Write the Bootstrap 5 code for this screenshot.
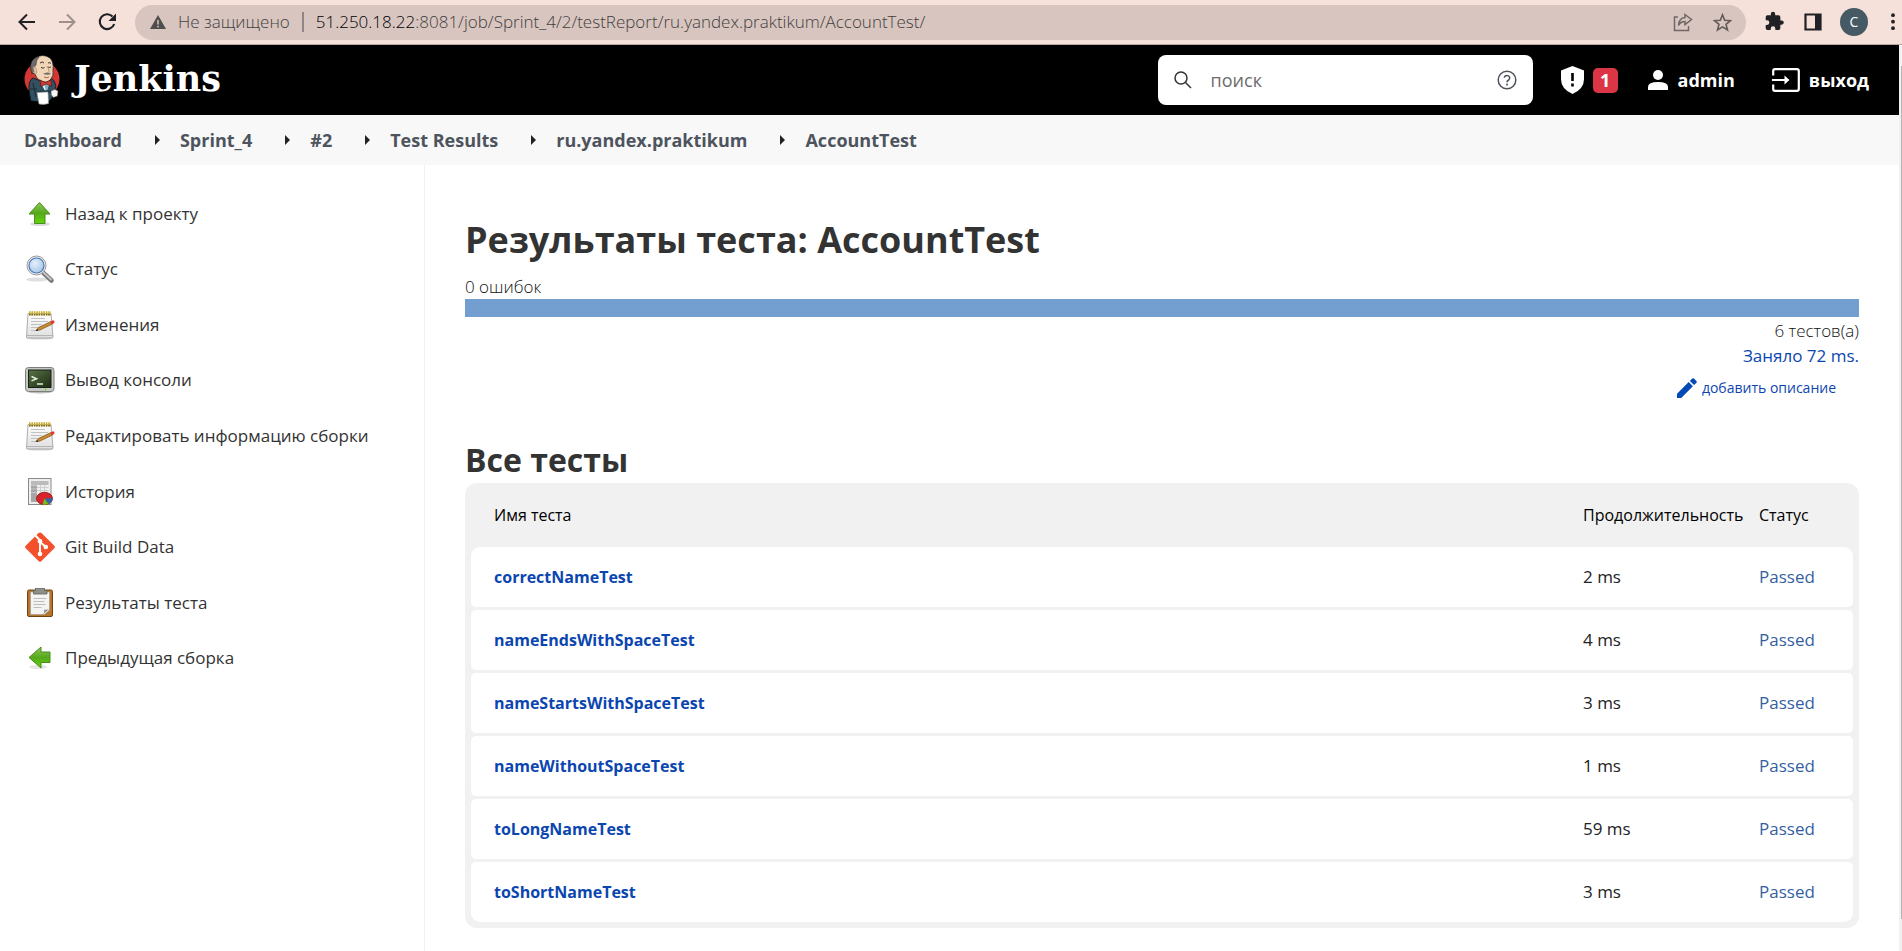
<!DOCTYPE html>
<html lang="ru">
<head>
<meta charset="utf-8">
<meta name="viewport" content="width=device-width, initial-scale=1">
<title>AccountTest [Jenkins]</title>
<link href="https://cdn.jsdelivr.net/npm/bootstrap@5.3.0/dist/css/bootstrap.min.css" rel="stylesheet">
<style>
  :root { --ink: #333; --link: #0b46b0; --passed: #355f9f; --panel: #f1f1f1; }
  body { font-family: "Open Sans", "Noto Sans", sans-serif; font-size: 17px; line-height: 26px; color: var(--ink); background: #fff; }
  a { text-decoration: none; color: inherit; }
  svg { display: block; flex: none; }

  /* browser toolbar */
  .toolbar { background: #f6e0da; border-bottom: 1px solid #b9a8a2; height: 45px; padding: 0 4px 0 13px; }
  .toolbar button, .searchbox button { border: 0; background: none; padding: 0; line-height: 1; }
  .nav-keys { gap: 12px; margin-right: 14px; }
  .nav-keys button { width: 28px; height: 28px; display: grid; place-items: center; }
  .omnibox { background: #d8c5bf; height: 35px; border-radius: 18px; padding: 0 14px 0 15px; color: #423e3d; font-weight: 300; gap: 12px; }
  .omnibox .host { color: #000; }
  .omnibox .rule { width: 2px; height: 20px; background: #8f8583; }
  .omnibox input { border: 0; background: none; padding: 0; color: inherit; font-weight: 300; min-width: 0; outline: 0; margin-left: -12px; }
  .toolbar .avatar { width: 28px; height: 28px; border-radius: 50%; background: #455a64; color: #fff; font-size: 14px; }
  .ext-keys { gap: 18px; margin-left: 16px; }

  /* page header */
  .page-header { background: #000; height: 70px; padding: 0 30px 0 24px; color: #fff; }
  .brand-name { font: bold 35px/48px "DejaVu Serif", serif; margin-left: 14px; padding-bottom: 3px; }
  .searchbox { background: #fff; border-radius: 8px; width: 375px; height: 50px; padding: 0 16px; }
  .searchbox input { border: 0; outline: 0; min-width: 0; padding: 0; margin-left: 19px; font-size: 18px; color: var(--ink); }
  .searchbox input::placeholder { color: #6c6c6c; opacity: 1; }
  .alert-count { background: #dc3545; border-radius: 5px; width: 25px; height: 25px; font-size: 18px; line-height: 25px; text-align: center; margin-left: 8px; }
  .head-link { font-size: 18px; font-weight: 700; }
  .head-link + .head-link { gap: 9px; }

  /* breadcrumbs */
  .crumbs { background: #f8f8f8; height: 50px; padding: 0 24px; font-size: 18px; font-weight: 700; color: #4d545d; }
  .crumbs li + li::before { content: ""; display: inline-block; border: 5px solid transparent; border-left-color: #222; border-right: 0; margin: 0 20px 2px 33px; }

  /* side panel */
  .side { width: 425px; border-right: 1px solid #f0f0f0; padding: 21px 24px 0; }
  .side ul { height: 500px; margin: 0; }
  .side a { font-weight: 500; gap: 9px; }

  /* results */
  .results { padding: 0 40px 23px; }
  h1 { font-size: 36px; line-height: 48px; font-weight: 700; margin: 51px 0 11px; }
  h2 { font-size: 32px; line-height: 44px; font-weight: 700; margin: 37px 0 1px; }
  .thin { font-weight: 300; line-height: 24px; color: #111; }
  .passbar { height: 18px; background: #729fcf; }
  .total { padding-top: 2px; }
  .took { color: var(--link); font-weight: 500; }
  .describe { color: var(--link); font-size: 14px; font-weight: 500; gap: 5px; margin: 6px 23px 0 0; }
  .testbox { background: var(--panel); border-radius: 12px; padding: 0 6px 3px; }
  .testbox table { width: 100%; border-collapse: separate; border-spacing: 0 3px; }
  .testbox th { height: 58px; font-size: 16px; font-weight: 500; color: #000; padding: 0; }
  .testbox td { height: 60px; background: #fff; padding: 0; font-weight: 500; color: #222; }
  .testbox td:first-child, .testbox th:first-child { padding-left: 23px; }
  .testbox td:first-child { border-radius: 5px 0 0 5px; }
  .testbox td:last-child { border-radius: 0 5px 5px 0; color: var(--passed); }
  .testbox tbody tr:first-child td:first-child { border-top-left-radius: 9px; }
  .testbox tbody tr:first-child td:last-child { border-top-right-radius: 9px; }
  .testbox tbody tr:last-child td:first-child { border-bottom-left-radius: 9px; }
  .testbox tbody tr:last-child td:last-child { border-bottom-right-radius: 9px; }
  .testbox td a { color: var(--link); font-size: 16px; font-weight: 700; }
  .col-time { width: 176px; }
  .col-state { width: 94px; }

  .scroller { width: 3px; background: var(--panel); padding: 21px 0 32px 2px; }
  .scroller span { background: #b5b5b5; }
</style>
</head>
<body class="d-flex flex-column min-vh-100">

<svg width="0" height="0" class="position-absolute" aria-hidden="true">
  <defs>
    <linearGradient id="leaf" x1="0" y1="0" x2="0" y2="1"><stop offset="0" stop-color="#8fc95a"/><stop offset=".5" stop-color="#55a81c"/><stop offset="1" stop-color="#62d50a"/></linearGradient>
    <linearGradient id="paper" x1="0" y1="0" x2="0" y2="1"><stop offset="0" stop-color="#fff"/><stop offset="1" stop-color="#dedede"/></linearGradient>
    <linearGradient id="screen" x1="0" y1="0" x2="1" y2="1"><stop offset="0" stop-color="#5a7346"/><stop offset="1" stop-color="#1c2c12"/></linearGradient>
    <radialGradient id="glass" cx=".4" cy=".35" r=".7"><stop offset="0" stop-color="#e4effb"/><stop offset="1" stop-color="#a5c5ea"/></radialGradient>
    <symbol id="i-notepad" viewBox="0 0 30 30">
      <ellipse cx="15" cy="28" rx="13" ry="1.6" fill="#bbb" opacity=".6"/>
      <path d="M3 3.500h23l2 23.500q0 1-1 1H2.500q-1 0-1-1z" fill="url(#paper)" stroke="#999" stroke-width=".8"/>
      <path d="M2 25.500h26" stroke="#a9a9a9" stroke-width=".8"/>
      <path d="M4 3.200h22" stroke="#c9ab2d" stroke-width="4" stroke-dasharray="1.600 .8"/>
      <path d="M4 4.700h22" stroke="#7d6a14" stroke-width="1.400" stroke-dasharray="1.600 .8"/>
      <path d="M6 8.500h14M6 11.500h17M6 14.500h11M6 17.500h9M6 20.500h6" stroke="#bcbcbc" stroke-width=".9"/>
      <path d="M11 20.500l2.500-3L26 11.500l1.500 2.500L15 20z" fill="#c98a34" stroke="#7b4f12" stroke-width=".7"/>
      <path d="M10.500 21l2-2 .8 1.400z" fill="#222"/>
      <path d="M25.500 11.500l2.500-1.200q1.500 0 1.500 1.500t-1.200 1.800l-1.200.6z" fill="#e3342f"/>
    </symbol>
  </defs>
</svg>

<header class="toolbar d-flex align-items-center">
  <div class="nav-keys d-flex">
    <button type="button" aria-label="Назад"><svg width="20" height="20" fill="none" stroke="#202124" stroke-width="2"><path d="M18 10H3M10 2.500L2.500 10l7.500 7.500"/></svg></button>
    <button type="button" aria-label="Вперёд"><svg width="20" height="20" fill="none" stroke="#9c8f8c" stroke-width="2"><path d="M2 10h15M10 2.500l7.500 7.500-7.500 7.500"/></svg></button>
    <button type="button" aria-label="Обновить"><svg width="20" height="20"><path d="M15.500 4.500A7.400 7.400 0 1 0 17.200 12" fill="none" stroke="#202124" stroke-width="2.100"/><path d="M19 1.500V9h-7.500z" fill="#202124"/></svg></button>
  </div>
  <div class="omnibox d-flex align-items-center flex-grow-1">
    <svg width="16" height="14"><path d="M8 0l8 14H0z" fill="#4f4d4e"/><path d="M8 5v4.500M8 10.800v1.700" stroke="#d8c5bf" stroke-width="1.500"/></svg>
    <span class="text-nowrap">Не защищено</span>
    <span class="rule"></span>
    <span class="host">51.250.18.22</span>
    <input class="flex-grow-1" type="text" aria-label="Адрес" value=":8081/job/Sprint_4/2/testReport/ru.yandex.praktikum/AccountTest/">
    <button type="button" aria-label="Поделиться" class="me-2"><svg width="20" height="20" fill="none" stroke="#706866" stroke-width="1.500"><path d="M5 5H1.500v13.500h14V14"/><path d="M12 2.500l6.500 5-6.500 5.200V9.500q-4.500 0-6.500 4 .5-7.500 6.500-8z"/></svg></button>
    <button type="button" aria-label="Закладка"><svg width="19" height="19"><path d="M9.500 1.800l2.200 5.400 5.800.4-4.500 3.700 1.500 5.700-5-3.100-5 3.100L6 11.300 1.500 7.600l5.800-.4z" fill="none" stroke="#635c5a" stroke-width="1.600"/></svg></button>
  </div>
  <div class="ext-keys d-flex align-items-center">
    <button type="button" aria-label="Расширения"><svg width="24" height="24" viewBox="0 0 24 24" fill="#202124"><path d="M20.500 11H19V7a2 2 0 0 0-2-2h-4V3.500a2.500 2.500 0 0 0-5 0V5H4a2 2 0 0 0-2 2v3.800h1.500a2.700 2.700 0 0 1 0 5.400H2V20a2 2 0 0 0 2 2h3.800v-1.500a2.700 2.700 0 0 1 5.400 0V22H17a2 2 0 0 0 2-2v-4h1.500a2.500 2.500 0 0 0 0-5z" transform="translate(2 1) scale(.86)"/></svg></button>
    <button type="button" aria-label="Боковая панель"><svg width="18" height="18"><path d="M1.500 1.500h15v15h-15z" fill="none" stroke="#202124" stroke-width="2.200"/><path d="M11 1h6v16h-6z" fill="#202124"/></svg></button>
    <button type="button" class="avatar">C</button>
    <button type="button" aria-label="Меню"><svg width="12" height="18" fill="#202124"><circle cx="7" cy="2.200" r="1.900"/><circle cx="7" cy="8.700" r="1.900"/><circle cx="7" cy="15.200" r="1.900"/></svg></button>
  </div>
</header>

<div class="d-flex flex-grow-1">
<div class="flex-grow-1 d-flex flex-column">
  <nav class="page-header d-flex align-items-center">
    <a href="#" class="d-flex align-items-center" aria-label="Jenkins">
      <svg width="36" height="50" viewBox="0 0 36 50">
        <circle cx="18" cy="24" r="17.500" fill="#d33833"/>
        <path d="M7 46q-2-8-2-14 0-7 4-9l10 4 8-4q4 2 5 8l-2 6q-1 7-6 10z" fill="#335061" stroke="#0c1015" stroke-width=".8"/>
        <path d="M17 28l5 10 4-12z" fill="#f0f2f4"/>
        <path d="M20 29l2.500 9 2.500-9z" fill="#81b0c4"/>
        <path d="M8 18Q5 7 11 3q8-5 15 0 4 4 3 12 1 6-2 9-4 5-10 2-5-2-6-7z" fill="#f0d6b7" stroke="#231f20" stroke-width=".8"/>
        <path d="M8 19Q4.500 8 10 4q3-2.500 5-2-3 3-3 8-2 1-1.500 5z" fill="#6d6b6d" stroke="#231f20" stroke-width=".5"/>
        <path d="M9 12q3-1 3.500 3.500T10.500 19z" fill="#e5c39e" stroke="#8a6f55" stroke-width=".5"/>
        <path d="M16 8q2.500-2 4 0M24 8q2-1 3 .5M17 12.500q2 1.200 3.500 0M24 12q1.500 1 3 0" fill="none" stroke="#231f20" stroke-width=".9"/>
        <path d="M23 11q3 5 1.500 6" fill="none" stroke="#b08a68" stroke-width=".9"/>
        <path d="M19 19q4-3 8-.3-3 1.800-8 .3z" fill="#6d6b6d"/>
        <path d="M20 22q3 1.500 5 0" fill="none" stroke="#8a4a3a" stroke-width=".8"/>
        <path d="M16 25l5.500 2.500L27 25l.5 6-5.500-2-5 2.500z" fill="#d33833" stroke="#4e0f0d" stroke-width=".6"/>
        <path d="M9 28l3 14M6 34h7" stroke="#1a2a35" stroke-width="1"/>
        <path d="M12 36.500q6-2 18-1l2 2-18 1.500z" fill="#1d3a4b"/>
        <path d="M13 37.500l11-.5.5 11.500q-5 1.500-9.500.5z" fill="#fff" stroke="#999" stroke-width=".6"/>
        <path d="M27 36q4-3 7 0l-.5 5-4 1.500q-3-2-2.500-6.500z" fill="#f7f7f7" stroke="#555" stroke-width=".6"/>
      </svg>
      <span class="brand-name">Jenkins</span>
    </a>
    <form class="searchbox d-flex align-items-center ms-auto" role="search">
      <svg width="18" height="18" fill="none" stroke="#333" stroke-width="1.500"><circle cx="7" cy="7" r="6"/><path d="M11.500 11.500l5.500 5.500"/></svg>
      <input class="flex-grow-1" type="search" placeholder="поиск" aria-label="поиск">
      <button type="button" aria-label="Помощь"><svg width="20" height="20" fill="none" stroke="#4d545d" stroke-width="1.500"><circle cx="10" cy="10" r="8.800"/><path d="M7.300 7.800a2.700 2.500 0 1 1 4.300 2.200q-1.600 1-1.600 2.300"/><circle cx="10" cy="14.600" r=".4"/></svg></button>
    </form>
    <a href="#" class="d-flex align-items-center head-link" style="margin-left:27px">
      <svg width="25" height="28" viewBox="0 0 25 28"><path d="M12.500 0L24 4.500V13q0 10-11.500 15Q1 23 1 13V4.500z" fill="#fff"/><path d="M12.500 7v8M12.500 17.500v3" stroke="#000" stroke-width="2.600"/></svg>
      <span class="alert-count">1</span>
    </a>
    <a href="#" class="d-flex align-items-center head-link" style="margin-left:29px">
      <svg width="22" height="22" fill="#fff"><circle cx="11" cy="6" r="5"/><path d="M1 21v-3q0-5 10-5t10 5v3z"/></svg>
      <span>admin</span>
    </a>
    <a href="#" class="d-flex align-items-center head-link" style="margin-left:37px">
      <svg width="28" height="24" fill="none" stroke="#fff" stroke-width="2.200"><path d="M1.200 7.500V3q0-1.800 1.800-1.800h22q1.800 0 1.800 1.800v18q0 1.800-1.800 1.800H3q-1.800 0-1.800-1.800v-4.500M0 12h15"/><path d="M12.500 7.500l5 4.500-5 4.500z" fill="#fff" stroke="none"/></svg>
      <span>выход</span>
    </a>
  </nav>

  <nav aria-label="Навигация">
    <ol class="crumbs list-unstyled d-flex align-items-center mb-0">
      <li><a href="#">Dashboard</a></li>
      <li><a href="#">Sprint_4</a></li>
      <li><a href="#">#2</a></li>
      <li><a href="#">Test Results</a></li>
      <li><a href="#">ru.yandex.praktikum</a></li>
      <li><a href="#">AccountTest</a></li>
    </ol>
  </nav>

  <div class="d-flex flex-grow-1">
    <aside class="side flex-shrink-0">
      <ul class="list-unstyled d-flex flex-column justify-content-around">
        <li><a href="#" class="d-flex align-items-center"><svg width="32" height="30"><ellipse cx="16" cy="25" rx="10" ry="2" fill="#ccc" opacity=".7"/><path d="M15.500 3.500L26 15h-5v9.500H10.500V15H5z" fill="url(#leaf)" stroke="#4c8c1c" stroke-width="1"/></svg>Назад к проекту</a></li>
        <li><a href="#" class="d-flex align-items-center"><svg width="32" height="30"><ellipse cx="13" cy="25.500" rx="11" ry="2" fill="#ccc" opacity=".6"/><path d="M19 18.500l8.500 8" stroke="#777" stroke-width="4.500" stroke-linecap="round"/><path d="M19 18l8 7.500" stroke="#c4c4c4" stroke-width="2" stroke-linecap="round"/><circle cx="12.500" cy="11.500" r="9.500" fill="#eee" stroke="#9a9a9a"/><circle cx="12.500" cy="11.500" r="7.500" fill="url(#glass)" stroke="#4a7ab8" stroke-width="1.200"/></svg>Статус</a></li>
        <li><a href="#" class="d-flex align-items-center"><svg width="32" height="30"><use href="#i-notepad" width="30" height="30" x="1"/></svg>Изменения</a></li>
        <li><a href="#" class="d-flex align-items-center"><svg width="32" height="30"><ellipse cx="16" cy="27" rx="12" ry="1.500" fill="#bbb"/><rect x="1.500" y="2.500" width="28.500" height="24" rx="3" fill="#c6c8c4" stroke="#7d7f7a"/><rect x="4.500" y="5" width="22.500" height="17.500" fill="url(#screen)" stroke="#1a1e18"/><path d="M7.500 11.500l5 2.200-5 2.200M13 19h6" fill="none" stroke="#e4f2dc" stroke-width="1.500"/><circle cx="21.500" cy="24.500" r=".9" fill="#73d216"/></svg>Вывод консоли</a></li>
        <li><a href="#" class="d-flex align-items-center"><svg width="32" height="30"><use href="#i-notepad" width="30" height="30" x="1"/></svg>Редактировать информацию сборки</a></li>
        <li><a href="#" class="d-flex align-items-center"><svg width="32" height="30"><rect x="4.500" y="1.500" width="22.500" height="26" fill="#eee" stroke="#8a8a8a"/><path d="M7 4h6v21H7z" fill="#a6a6a6"/><path d="M7 4h17.500v4H7z" fill="#bbb"/><path d="M13 10.500h11.500M13 13.500h11.500M16.500 8v9M20.500 8v7M7 8.500h6M7 12h6M7 15.500h6" stroke="#ccc" stroke-width=".9"/><ellipse cx="20.500" cy="21.500" rx="8" ry="6.200" fill="#d8232a" stroke="#8c1218" stroke-width=".8"/><path d="M20.500 21.500l8-.5q0 4-4 6z" fill="#3465a4"/><path d="M20.500 21.500l4 5.600q-3.500 1.200-6 .4z" fill="#6ac31a"/></svg>История</a></li>
        <li><a href="#" class="d-flex align-items-center"><svg width="32" height="30" viewBox="0 0 32 30"><path d="M16 .4q.8 0 1.500.6l12.800 12.800q1.200 1.200 0 2.400L17.200 29.200q-1.200 1.200-2.400 0L1.700 16.200q-1.200-1.200 0-2.400L14.500 1q.7-.6 1.500-.6z" fill="#f4502c"/><path d="M11.500 3.500l4.500 5v14M16 10l6 5" fill="none" stroke="#fff" stroke-width="2"/><circle cx="16" cy="9.300" r="2.300" fill="#fff"/><circle cx="16" cy="22" r="2.300" fill="#fff"/><circle cx="21.800" cy="15" r="2.300" fill="#fff"/></svg>Git Build Data</a></li>
        <li><a href="#" class="d-flex align-items-center"><svg width="32" height="30"><rect x="3.500" y="2" width="25" height="26.500" rx="1.500" fill="#b5762c" stroke="#6f4411"/><path d="M6.500 4h19v18l-5 4.500h-14z" fill="#f4f4f2" stroke="#999" stroke-width=".6"/><path d="M25.500 20.500l-6.500 6q2-3 1-5 3 1 5.500-1z" fill="#8c8c8c"/><path d="M9.500 10.500h13M9.500 13.500h11M9.500 16.500h12M9.500 19.500h8" stroke="#bdbdbd" stroke-width="1.100"/><path d="M11.500 0h9v2.500h2.500V6H9.500V2.500h2z" fill="#8c9089" stroke="#5f625d" stroke-width=".8"/></svg>Результаты теста</a></li>
        <li><a href="#" class="d-flex align-items-center"><svg width="32" height="30"><ellipse cx="14" cy="24" rx="9" ry="2" fill="#ccc" opacity=".5"/><path d="M5 14.500L17 4v5h9v10.500h-9V25z" fill="url(#leaf)" stroke="#4c8c1c" stroke-width="1"/></svg>Предыдущая сборка</a></li>
      </ul>
    </aside>

    <main class="results flex-grow-1">
      <h1>Результаты теста: AccountTest</h1>
      <div class="thin">0 ошибок</div>
      <div class="passbar"></div>
      <div class="thin total text-end">6 тестов(а)</div>
      <div class="text-end"><a href="#" class="took">Заняло 72 ms.</a></div>
      <div class="d-flex justify-content-end"><a href="#" class="describe d-flex align-items-center"><svg width="20" height="20" fill="#004ab8"><path d="M0 15.800L11.700 4.100l4.200 4.200L4.200 20H0z"/><path d="M12.900 2.900L15.200.6q.8-.8 1.700 0l2.500 2.500q.8.900 0 1.700l-2.300 2.300z"/></svg>добавить описание</a></div>

      <h2>Все тесты</h2>
      <div class="testbox">
        <table>
          <thead><tr><th>Имя теста</th><th class="col-time">Продолжительность</th><th class="col-state">Статус</th></tr></thead>
          <tbody>
            <tr><td><a href="#">correctNameTest</a></td><td>2 ms</td><td>Passed</td></tr>
            <tr><td><a href="#">nameEndsWithSpaceTest</a></td><td>4 ms</td><td>Passed</td></tr>
            <tr><td><a href="#">nameStartsWithSpaceTest</a></td><td>3 ms</td><td>Passed</td></tr>
            <tr><td><a href="#">nameWithoutSpaceTest</a></td><td>1 ms</td><td>Passed</td></tr>
            <tr><td><a href="#">toLongNameTest</a></td><td>59 ms</td><td>Passed</td></tr>
            <tr><td><a href="#">toShortNameTest</a></td><td>3 ms</td><td>Passed</td></tr>
          </tbody>
        </table>
      </div>
    </main>
  </div>
</div>
<div class="scroller d-flex" aria-hidden="true"><span class="flex-grow-1"></span></div>
</div>

<script src="https://cdn.jsdelivr.net/npm/bootstrap@5.3.0/dist/js/bootstrap.bundle.min.js"></script>
</body>
</html>
